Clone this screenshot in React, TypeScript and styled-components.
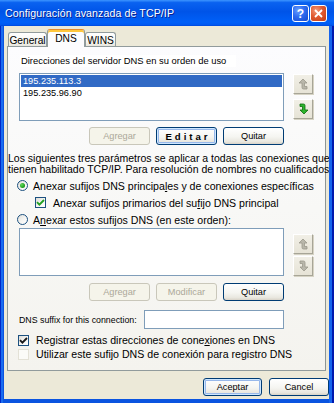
import styled, { createGlobalStyle } from 'styled-components';

const GlobalStyle = createGlobalStyle`
  html, body {
    margin: 0;
    padding: 0;
    background: #ffffff;
  }
  body {
    font-family: "Liberation Sans", Arial, sans-serif;
    color: #000;
  }
  * {
    box-sizing: border-box;
  }
`;

const Window = styled.div`
  width: 334px;
  height: 403px;
  display: flex;
  flex-direction: column;
  background: linear-gradient(
    90deg,
    #0028c8 0 1px,
    #1a6cf0 1px 3px,
    #0a54e0 3px 329px,
    #1664ec 329px 332px,
    #0019b0 332px
  );
`;

const TitleBar = styled.div`
  height: 26px;
  flex: 0 0 26px;
  display: flex;
  align-items: center;
  padding: 0 7px 0 5px;
  background: linear-gradient(
    to bottom,
    #3d95ff 0%,
    #0a62f0 10%,
    #0054e8 45%,
    #0060f8 85%,
    #005af2 94%,
    #0048dc 100%
  );
`;

const TitleText = styled.span`
  flex: 1;
  color: #fff;
  font-size: 10.6px;
  letter-spacing: 0.1px;
  text-shadow: 1px 1px 0 #0a1e8c;
  white-space: nowrap;
`;

const CaptionButtons = styled.div`
  display: flex;
  gap: 1px;
  margin-top: 1px;
`;

const CaptionButton = styled.div<{ $kind: 'help' | 'close' }>`
  width: 17px;
  height: 17px;
  border: 1px solid #fff;
  border-radius: 3px;
  display: flex;
  align-items: center;
  justify-content: center;
  color: #fff;
  font-weight: bold;
  font-size: 12px;
  background: ${(p) =>
    p.$kind === 'close'
      ? 'radial-gradient(circle at 35% 30%, #f39a7c 0%, #e05a32 45%, #c23c14 100%)'
      : 'radial-gradient(circle at 35% 30%, #6aa0ff 0%, #2e6cf0 45%, #1648cc 100%)'};
`;

const Client = styled.div`
  flex: 1;
  margin: 0 5px 4px 4px;
  background: #ece9d8;
  display: flex;
  flex-direction: column;
  overflow: hidden;
`;

const TabStrip = styled.div`
  display: flex;
  align-items: flex-end;
  height: 18px;
  margin-top: 3px;
  padding-left: 4px;
`;

const Tab = styled.div<{ $active?: boolean; $w: number }>`
  width: ${(p) => p.$w}px;
  height: ${(p) => (p.$active ? 18 : 15)}px;
  display: flex;
  align-items: center;
  justify-content: center;
  padding-bottom: ${(p) => (p.$active ? 1 : 0)}px;
  font-size: 10.2px;
  border: 1px solid #919b9c;
  border-bottom: none;
  border-radius: 3px 3px 0 0;
  position: relative;
  z-index: ${(p) => (p.$active ? 2 : 0)};
  border-top-color: ${(p) => (p.$active ? '#e68b2c' : '#919b9c')};
  background: ${(p) =>
    p.$active
      ? '#fcfcfe'
      : 'linear-gradient(to bottom, #ffffff 0%, #f6f6f2 60%, #e4e2d8 100%)'};
  box-shadow: ${(p) => (p.$active ? 'inset 0 2px 0 #ffc73c' : 'none')};
`;

const Panel = styled.div`
  height: 325px;
  margin: -1px 3px 0 3px;
  border: 1px solid #919b9c;
  border-right-color: #8c9596;
  background: linear-gradient(to bottom, #fcfcfe 0%, #f8f8f6 50%, #f4f3ee 100%);
  display: flex;
  flex-direction: column;
  position: relative;
  z-index: 1;
`;

const Section = styled.div<{ $mt?: number }>`
  padding-left: 11px;
  margin-top: ${(p) => p.$mt ?? 0}px;
`;

const FieldLabel = styled.div`
  display: inline-block;
  margin: 8px 0 0 1px;
  padding: 0 10px 0 1px;
  height: 12px;
  line-height: 12px;
  font-size: 9.4px;
  background: #ffffff;
`;

const ListRow = styled.div<{ $mt: number }>`
  display: flex;
  margin-top: ${(p) => p.$mt}px;
`;

const ListBox = styled.div`
  width: 265px;
  height: 48px;
  border: 1px solid #7f9db9;
  background: #fff;
  padding: 1px;
`;

const ListItem = styled.div<{ $selected?: boolean }>`
  height: 12px;
  line-height: 12px;
  padding-left: 2px;
  font-size: 9.2px;
  color: ${(p) => (p.$selected ? '#fff' : '#000')};
  background: ${(p) => (p.$selected ? '#316ac5' : 'transparent')};
`;

const ArrowStack = styled.div<{ $top: number; $gap: number }>`
  display: flex;
  flex-direction: column;
  margin-left: 9px;
  padding-top: ${(p) => p.$top}px;
  gap: ${(p) => p.$gap}px;
`;

const ArrowButton = styled.div`
  width: 20px;
  height: 20px;
  display: flex;
  align-items: center;
  justify-content: center;
  border: 1px solid;
  border-color: #ffffff #a7a597 #a7a597 #ffffff;
  background: linear-gradient(to bottom, #f1efe6 0%, #e6e3d6 100%);
  box-shadow: 1px 1px 0 #d6d3c4;
`;

const ButtonRow = styled.div<{ $mt: number }>`
  display: flex;
  justify-content: flex-end;
  gap: 6px;
  width: 265px;
  margin-top: ${(p) => p.$mt}px;
`;

const XpButton = styled.div<{ $disabled?: boolean; $focus?: boolean; $w?: number; $bold?: boolean }>`
  width: ${(p) => p.$w ?? 61}px;
  height: 18px;
  display: flex;
  align-items: center;
  justify-content: center;
  border-radius: 3px;
  font-size: ${(p) => (p.$bold ? 9.6 : 9.2)}px;
  font-weight: ${(p) => (p.$bold ? 'bold' : 'normal')};
  letter-spacing: ${(p) => (p.$bold ? '3px' : '0')};
  padding-left: ${(p) => (p.$bold ? 3 : 0)}px;
  border: 1px solid ${(p) => (p.$disabled ? '#c9c7ba' : '#003c74')};
  color: ${(p) => (p.$disabled ? '#aca899' : '#000')};
  background: ${(p) =>
    p.$disabled
      ? '#f5f4ea'
      : 'linear-gradient(to bottom, #ffffff 0%, #f5f5f1 55%, #e9e7df 85%, #d8d3c8 100%)'};
  box-shadow: ${(p) =>
    p.$focus ? 'inset 0 0 0 1px #cee7ff, inset 0 0 0 2px #98b8ea' : 'none'};
`;

const Paragraph = styled.div`
  margin-top: 8px;
  font-size: 10.5px;
  line-height: 11px;
  white-space: nowrap;
  position: relative;
  z-index: 3;
  width: 330px;
`;

const Options = styled.div`
  margin-top: 2px;
  display: flex;
  flex-direction: column;
`;

const OptionRow = styled.label<{ $indent: number; $gap: number; $h: number }>`
  display: flex;
  align-items: center;
  height: ${(p) => p.$h}px;
  padding-left: ${(p) => p.$indent}px;
  gap: ${(p) => p.$gap}px;
  font-size: 10.6px;
  white-space: nowrap;
`;

const Radio = styled.span<{ $checked?: boolean }>`
  width: 11px;
  height: 11px;
  flex: 0 0 11px;
  border-radius: 50%;
  border: 1px solid #1c5180;
  background: linear-gradient(135deg, #dcdcd7 0%, #f4f4f1 50%, #ffffff 100%);
  display: flex;
  align-items: center;
  justify-content: center;
  &::after {
    content: '';
    display: ${(p) => (p.$checked ? 'block' : 'none')};
    width: 5px;
    height: 5px;
    border-radius: 50%;
    background: radial-gradient(circle at 35% 35%, #62d95e 0%, #21a121 60%, #0e7a0e 100%);
  }
`;

const CheckBox = styled.span<{ $disabled?: boolean }>`
  width: 11px;
  height: 11px;
  flex: 0 0 11px;
  border: 1px solid ${(p) => (p.$disabled ? '#e3e1d6' : '#1c5180')};
  background: ${(p) =>
    p.$disabled ? '#fbfbf8' : 'linear-gradient(135deg, #dcdcd7 0%, #f4f4f1 50%, #ffffff 100%)'};
  display: flex;
  align-items: center;
  justify-content: center;
`;

const SuffixRow = styled.div`
  display: flex;
  align-items: center;
  justify-content: space-between;
  width: 265px;
  margin-top: 9px;
`;

const SmallLabel = styled.span`
  font-size: 8.8px;
  white-space: nowrap;
`;

const TextInput = styled.div`
  width: 140px;
  height: 19px;
  border: 1px solid #7f9db9;
  background: #fff;
`;

const Checks = styled.div`
  margin-top: 4px;
  display: flex;
  flex-direction: column;
`;

const Footer = styled.div`
  display: flex;
  justify-content: flex-end;
  gap: 7px;
  margin-top: 7px;
  padding-right: 0px;
`;

function Tick({ color }: { color: string }) {
  return (
    <svg width="9" height="9" viewBox="0 0 9 9">
      <path d="M1 4.2 L3.4 6.6 L8 2" fill="none" stroke={color} strokeWidth="1.9" />
    </svg>
  );
}

function MoveArrow({ dir, enabled }: { dir: 'up' | 'down'; enabled?: boolean }) {
  const fill = enabled ? '#2cb52c' : '#b9b7ab';
  const edge = enabled ? '#0b6b0b' : '#9a988c';
  const shape =
    dir === 'up'
      ? 'M5 1 L9 5 L6.5 5 L6.5 8.5 L9 8.5 L9 11 L5.5 11 Q4 11 4 9.5 L4 5 L1 5 Z'
      : 'M6 11 L2 7 L4.5 7 L4.5 3.5 L2 3.5 L2 1 L5.5 1 Q7 1 7 2.5 L7 7 L10 7 Z';
  return (
    <svg width="11" height="12" viewBox="0 0 11 12">
      <path d={shape} fill={fill} stroke={edge} strokeWidth="0.8" strokeLinejoin="round" />
    </svg>
  );
}

export default function App() {
  return (
    <>
      <GlobalStyle />
      <Window>
        <TitleBar>
          <TitleText>Configuración avanzada de TCP/IP</TitleText>
          <CaptionButtons>
            <CaptionButton $kind="help">?</CaptionButton>
            <CaptionButton $kind="close">
              <svg width="9" height="9" viewBox="0 0 9 9">
                <path d="M1 1 L8 8 M8 1 L1 8" stroke="#fff" strokeWidth="1.8" />
              </svg>
            </CaptionButton>
          </CaptionButtons>
        </TitleBar>
        <Client>
          <TabStrip>
            <Tab $w={39}>General</Tab>
            <Tab $w={38} $active>DNS</Tab>
            <Tab $w={31}>WINS</Tab>
          </TabStrip>
          <Panel>
            <Section>
              <FieldLabel>Direcciones del servidor DNS en su orden de uso</FieldLabel>
              <ListRow $mt={5}>
                <ListBox>
                  <ListItem $selected>195.235.113.3</ListItem>
                  <ListItem>195.235.96.90</ListItem>
                </ListBox>
                <ArrowStack $top={1} $gap={5}>
                  <ArrowButton>
                    <MoveArrow dir="up" />
                  </ArrowButton>
                  <ArrowButton>
                    <MoveArrow dir="down" enabled />
                  </ArrowButton>
                </ArrowStack>
              </ListRow>
              <ButtonRow $mt={6}>
                <XpButton $disabled>Agregar</XpButton>
                <XpButton $focus $bold>Editar</XpButton>
                <XpButton>Quitar</XpButton>
              </ButtonRow>
            </Section>
            <Paragraph>
              Los siguientes tres parámetros se aplicar a todas las conexiones que
              <br />
              tienen habilitado TCP/IP. Para resolución de nombres no cualificados
            </Paragraph>
            <Options>
              <OptionRow $indent={9} $gap={5} $h={17}>
                <Radio $checked />
                <span>
                  Anexar sufijos DNS principa<u>l</u>es y de conexiones específicas
                </span>
              </OptionRow>
              <OptionRow $indent={27} $gap={7} $h={17}>
                <CheckBox>
                  <Tick color="#21a121" />
                </CheckBox>
                <span>
                  Anexar sufijos primarios del su<u>f</u>ijo DNS principal
                </span>
              </OptionRow>
              <OptionRow $indent={9} $gap={5} $h={17}>
                <Radio />
                <span>
                  A<u>n</u>exar estos sufijos DNS (en este orden):
                </span>
              </OptionRow>
            </Options>
            <Section>
              <ListRow $mt={0}>
                <ListBox />
                <ArrowStack $top={6} $gap={2}>
                  <ArrowButton>
                    <MoveArrow dir="up" />
                  </ArrowButton>
                  <ArrowButton>
                    <MoveArrow dir="down" />
                  </ArrowButton>
                </ArrowStack>
              </ListRow>
              <ButtonRow $mt={7}>
                <XpButton $disabled>Agregar</XpButton>
                <XpButton $disabled>Modificar</XpButton>
                <XpButton>Quitar</XpButton>
              </ButtonRow>
              <SuffixRow>
                <SmallLabel>DNS suffix for this connection:</SmallLabel>
                <TextInput />
              </SuffixRow>
            </Section>
            <Checks>
              <OptionRow $indent={10} $gap={7} $h={14}>
                <CheckBox>
                  <Tick color="#1a1a1a" />
                </CheckBox>
                <span>
                  Registrar estas direcciones de cone<u>x</u>iones en DNS
                </span>
              </OptionRow>
              <OptionRow $indent={10} $gap={7} $h={14}>
                <CheckBox $disabled />
                <span>Utilizar este sufijo DNS de conexión para registro DNS</span>
              </OptionRow>
            </Checks>
          </Panel>
          <Footer>
            <XpButton $w={59} $focus>
              Aceptar
            </XpButton>
            <XpButton $w={60}>Cancel</XpButton>
          </Footer>
        </Client>
      </Window>
    </>
  );
}
